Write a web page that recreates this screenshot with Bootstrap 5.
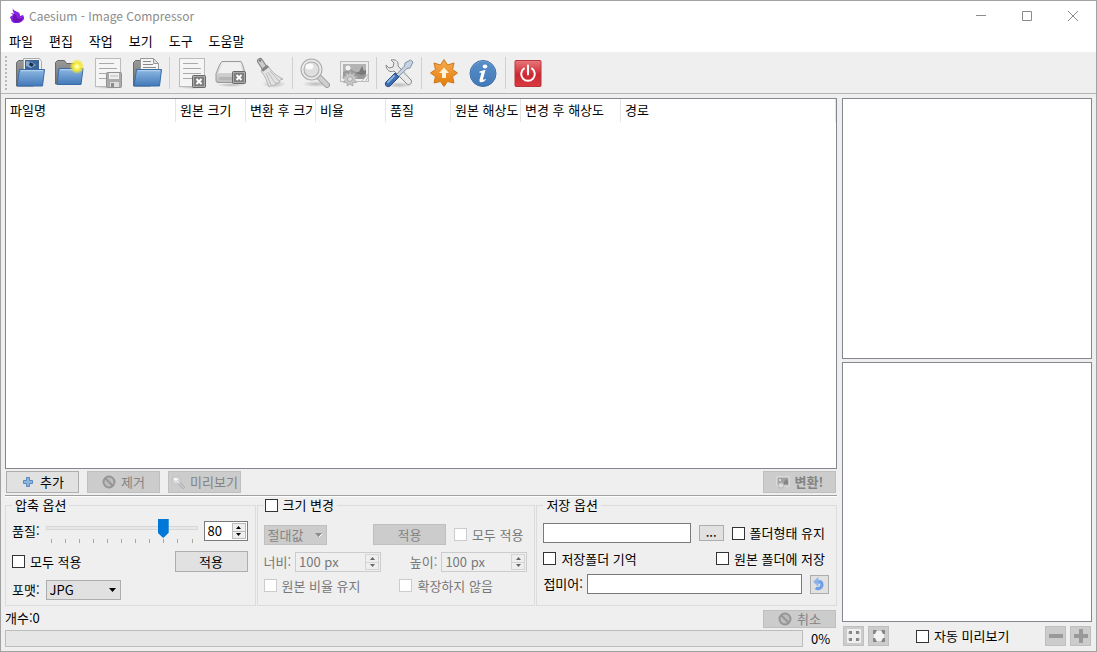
<!DOCTYPE html>
<html lang="ko">
<head>
<meta charset="utf-8">
<meta name="viewport" content="width=device-width, initial-scale=1">
<title>Caesium - Image Compressor</title>
<link href="https://cdn.jsdelivr.net/npm/bootstrap@5.3.0/dist/css/bootstrap.min.css" rel="stylesheet">
<style>
  body { font: 13px/16px "Noto Sans CJK KR", sans-serif; color: #000; background: #efefef; }
  .app-window { min-height: 100vh; border: 1px solid #a2a2a2; }
  .title-bar { height: 30px; background: #fff; color: #8c8c8c; font-size: 12px; }
  .title-bar svg { width: 16px; height: 16px; }
  .title-bar .glyph { width: 10px; height: 10px; }
  .win-btn { width: 46px; height: 30px; border: 0; padding: 0; background: none; display: grid; place-items: center; }
  .menu-strip { height: 22px; background: #fff; border-bottom: 1px solid #f0f0f0; }
  .menu-strip a { color: #000; text-decoration: none; padding: 2px 8px 0; }
  .tool-strip { height: 41px; border-bottom: 1px solid #b4b4b4; padding-left: 4px; }
  .grip { width: 2px; height: 34px; margin-right: 3px; background: repeating-linear-gradient(#b8b8b8 0 2px, #efefef 2px 4px); }
  .tool-btn { width: 39px; height: 38px; border: 0; padding: 0; background: none; display: grid; place-items: center; }
  .tool-btn svg { width: 32px; height: 32px; }
  .tool-sep { width: 6px; height: 32px; background: linear-gradient(#d0d0d0, #d0d0d0) 3px 0 / 1px 100% no-repeat; }
  .work-area { padding: 4px; gap: 5px; }
  .side { width: 250px; gap: 3px; }
  .pane { border: 1px solid #828790; background: #fff; }
  .file-table { table-layout: fixed; width: 100%; border-collapse: separate; border-spacing: 0; }
  .file-table th { font-weight: 400; height: 23px; padding: 0 2px 0 4px; border-right: 1px solid #e5e5e5; }
  .file-table th span { display: block; overflow: hidden; white-space: nowrap; line-height: 22px; height: 23px; }
  .w-name { width: 170px; } .w-size { width: 70px; } .w-quality { width: 65px; } .w-newres { width: 100px; }
  .push { height: 22px; width: 73px; padding: 0; border: 1px solid #adadad; background: #e1e1e1; color: #000; display: flex; align-items: center; justify-content: center; gap: 5px; white-space: nowrap; flex: none; line-height: 16px; }
  .push svg { width: 14px; height: 14px; flex: none; }
  .push:disabled { background: #ccc; border-color: #bfbfbf; color: #838383; }
  .push-low { height: 18px; }
  .push-apply { height: 21px; }
  .push-dots { width: 25px; height: 16px; align-items: end; }
  .push-reset { width: 19px; height: 19px; }
  .push-reset svg { width: 15px; height: 15px; }
  .push-sq { width: 21px; height: 20px; }
  .push-sq svg { width: 16px; height: 16px; }
  .action-row { padding: 2px 1px; border-bottom: 1px solid #a0a0a0; box-shadow: 0 1px #fff; gap: 8px; }
  .groups { gap: 1px; margin-top: 1px; }
  .opt-group { border: 1px solid #dcdcdc; padding: 0 7px 5px 6px; min-width: 0; }
  .opt-group legend { float: none; width: auto; font-size: 13px; line-height: 16px; margin: 0; padding: 0 3px; height: 16px; display: flex; align-items: center; gap: 5px; }
  .g-quality { flex: 249 1 0; } .g-size { flex: 279 1 0; } .g-save { flex: 302 1 0; }
  .g-size legend { padding-left: 1px; margin-left: 0; }
  .g-quality .rows { padding-top: 6px; gap: 8px; }
  .g-size .rows { padding-top: 11px; gap: 7px; }
  .g-save .rows { padding-top: 10px; gap: 9px; }
  .tick { appearance: none; width: 13px; height: 13px; margin: 0; border: 1px solid #333; background: #fff; border-radius: 0; flex: none; }
  .tick:checked { background: #0078d7; }
  .tick:disabled { border-color: #ccc; }
  .tick-label { display: flex; align-items: center; gap: 5px; white-space: nowrap; height: 13px; }
  .off { color: #787878; }
  .field { border: 1px solid #7a7a7a; background: #fff; height: 20px; padding: 0 4px; min-width: 0; border-radius: 0; }
  .spin { border: 1px solid #7a7a7a; background: #fff; height: 20px; display: flex; padding: 1px; }
  .spin input { border: 0; padding: 0 2px; min-width: 0; width: 100%; background: none; color: inherit; line-height: 16px; outline: 0; }
  .spin .arrows { width: 14px; flex: none; display: flex; flex-direction: column; }
  .spin button { flex: 1; padding: 0; border: 1px solid #bbb; background: #eee; display: grid; place-items: center; min-height: 0; }
  .spin button + button { border-top: 0; }
  .spin svg { width: 5px; height: 3px; display: block; }
  .spin.off { border-color: #ccc; background: #efefef; }
  .spin.off button { border-color: #d4d4d4; }
  .spin-q { width: 44px; } .spin-px { width: 86px; }
  .drop { position: relative; height: 20px; }
  .drop select { appearance: none; width: 100%; height: 20px; border: 1px solid #adadad; background: #e1e1e1; border-radius: 0; padding: 0 3px; line-height: 16px; color: #000; opacity: 1; }
  .drop select:disabled { background: #ccc; border-color: #bfbfbf; color: #838383; }
  .drop svg { position: absolute; right: 5px; top: 8px; width: 7px; height: 4px; pointer-events: none; }
  .drop-format { width: 75px; margin-left: 6px; } .drop-mode { width: 63px; }
  .slider { display: flex; flex-direction: column; min-width: 0; margin: 0 6px; }
  .slider input { appearance: none; width: 100%; height: 18px; margin: 0; background: none; display: block; }
  .slider input::-webkit-slider-runnable-track { height: 4px; border: 1px solid #d6d6d6; background: #e7eaea; }
  .slider input::-webkit-slider-thumb { appearance: none; width: 11px; height: 19px; margin-top: -8px; background: #0078d7; clip-path: polygon(0 0, 100% 0, 100% 72%, 50% 100%, 0 72%); }
  .scale-marks { display: flex; justify-content: space-between; padding: 2px 5px 0; }
  .scale-marks i { width: 1px; height: 4px; background: #aaa99c; }
  .status-row { height: 18px; margin-top: 4px; padding-right: 1px; }
  .bar-row { margin-top: 2px; gap: 8px; height: 17px; }
  .bar-track { height: 17px; border: 1px solid #bcbcbc; background: #e6e6e6; }
  .bar-row output { width: 26px; flex: none; line-height: 16px; }
  .zoom-row { height: 22px; padding: 0 1px; }
  .zoom-row .tick-label { margin: 0 auto 0 27px; }
</style>
</head>
<body>
<svg width="0" height="0" class="position-absolute" aria-hidden="true">
  <defs>
    <linearGradient id="blue" x2="0" y2="1"><stop stop-color="#8db8e2"/><stop offset="1" stop-color="#4379b9"/></linearGradient>
    <linearGradient id="grey" x2="0" y2="1"><stop stop-color="#ededed"/><stop offset="1" stop-color="#bdbdbd"/></linearGradient>
    <linearGradient id="dark" x2="0" y2="1"><stop stop-color="#999"/><stop offset="1" stop-color="#707070"/></linearGradient>
    <linearGradient id="orange" x2="0" y2="1"><stop stop-color="#f5ad55"/><stop offset=".5" stop-color="#ee922b"/><stop offset="1" stop-color="#e07d08"/></linearGradient>
    <linearGradient id="red" x2="0" y2="1"><stop stop-color="#e8797c"/><stop offset=".55" stop-color="#cc2731"/><stop offset="1" stop-color="#d83b43"/></linearGradient>
    <radialGradient id="sun"><stop stop-color="#fff"/><stop offset=".25" stop-color="#fffa70"/><stop offset=".6" stop-color="#f4e52c" stop-opacity=".9"/><stop offset="1" stop-color="#f4e52c" stop-opacity="0"/></radialGradient>
    <radialGradient id="shade"><stop stop-color="#777" stop-opacity=".45"/><stop offset="1" stop-color="#777" stop-opacity="0"/></radialGradient>
    <g id="folder-front"><path d="M5.500 12.500h25L28.500 29H3z" fill="url(#blue)" stroke="#386ba8"/><path d="M7 13.700h22" stroke="#b9d5f0"/></g>
    <g id="sheet"><ellipse cx="16" cy="30" rx="15" ry="2" fill="url(#shade)"/><rect x="3.500" y="1.500" width="25" height="28" fill="#f5f5f5" stroke="#bcbcbc"/><path d="M7 6.500h15M7 11.500h18M7 16.500h18M7 21.500h10" stroke="#a9a9a9"/></g>
    <g id="cross"><rect x=".5" y=".5" width="13" height="12" rx="1" fill="#7e7e7e" stroke="#696969"/><rect x="1.500" y="1.500" width="11" height="10" fill="none" stroke="#aaa"/><path d="M4.500 4l5 5m0-5l-5 5" stroke="#fff" stroke-width="2"/></g>
    <g id="photo"><rect x="2.500" y="4.500" width="28" height="20" fill="#eee" stroke="#bbb"/><path d="M5 7h23v15H5z" fill="#b4b4b4"/><path d="M5 15l7-3 6 3 10-1v8H5z" fill="#999"/><path d="M17 16l4-1 3-6 2 5 2-1v4l-5 1z" fill="#7a7a7a"/><circle cx="10" cy="11" r="2.500" fill="#f4f4f4"/><path d="M24 24l6-7v3l-3 5z" fill="#f5f5f5" stroke="#bbb"/><path d="M12 14l1.500 3.500 3-1.500-.5 3.500 3.500.5-3 2.500 2 3-3.500-.2-.2 3.700-2.800-2-2.800 2-.2-3.700-3.500.2 2-3-3-2.500 3.500-.5L8 16l3 1.500z" fill="#c8c8c8" stroke="#adadad"/><circle cx="12" cy="22" r="2.500" fill="#ddd" stroke="#aaa"/></g>
    <g id="photo-small"><path d="M1 2h12v9H1z" fill="#a2a2a2" stroke="#e6e6e6"/><circle cx="4" cy="5" r="1" fill="#eee"/><path d="M8 7l2-3 2 2v3H8z" fill="#858585"/><circle cx="5" cy="10.500" r="2.700" fill="#ddd" stroke="#b5b5b5"/></g>
    <g id="banned"><circle cx="7" cy="7" r="5.500" fill="#bcbcbc" stroke="#969696" stroke-width="2"/><path d="M3 3l8 8" stroke="#969696" stroke-width="2"/></g>
    <g id="lens"><path d="M20 20l8 8" stroke="#999" stroke-width="6" stroke-linecap="round"/><path d="M20 20l8 8" stroke="#cfcfcf" stroke-width="4" stroke-linecap="round"/><circle cx="12.500" cy="12.500" r="9" fill="#dedede" stroke="#aaa" stroke-width="4"/><circle cx="12.500" cy="12.500" r="9" fill="none" stroke="#e9e9e9" stroke-width="2"/><ellipse cx="10.500" cy="9.500" rx="4" ry="3" fill="#fafafa"/></g>
    <path id="up" d="M0 3L2.500 0 5 3z"/>
    <path id="down" d="M0 0h5L2.500 3z"/>
  </defs>
</svg>

<div class="app-window d-flex flex-column">
  <header class="title-bar d-flex align-items-center">
    <svg class="ms-2 me-1" viewBox="0 0 16 16" aria-hidden="true"><path d="M4 0c0 3 3 3 5 4 2 1 2 3 2 4l3-1c1 1 1 3 1 4-1 2-3 3-5 4H5c-2-1-3-2-3-4L1 10c0-2 2-2 3-3L2 5c1 0 2 0 3 1C5 4 3 3 4 0z" fill="#8a20e0"/><path d="M5 6c2 1 3 2 3 4 2 1 4 1 6 0-1 3-5 5-8 4-2-1-3-3-2-5z" fill="#6a12b8"/></svg>
    <span>Caesium - Image Compressor</span>
    <div class="d-flex ms-auto">
      <button class="win-btn" aria-label="최소화"><svg class="glyph" viewBox="0 0 10 10"><path d="M0 4.500h10" stroke="#8c8c8c"/></svg></button>
      <button class="win-btn" aria-label="최대화"><svg class="glyph" viewBox="0 0 10 10"><path d="M.5.5h9v9h-9z" fill="none" stroke="#8c8c8c"/></svg></button>
      <button class="win-btn" aria-label="닫기"><svg class="glyph" viewBox="0 0 10 10"><path d="M0 0l10 10M10 0L0 10" stroke="#8c8c8c"/></svg></button>
    </div>
  </header>
  <nav class="menu-strip d-flex">
    <a href="#">파일</a><a href="#">편집</a><a href="#">작업</a><a href="#">보기</a><a href="#">도구</a><a href="#">도움말</a>
  </nav>
  <div class="tool-strip d-flex align-items-center" role="toolbar">
    <span class="grip"></span>
    <button class="tool-btn" aria-label="사진 추가"><svg viewBox="0 0 32 32"><path d="M2.500 29V5.500l2-2h7l2 2h6V29z" fill="url(#dark)" stroke="#6b6b6b"/><path d="M9.500 1.500h16l2 3V16h-18z" fill="#f1f1f1" stroke="#aaa"/><path d="M11 3h14v10H11z" fill="#3c6595"/><path d="M12 4l6 1 4 3-5 3-5-2z" fill="#86a9d0"/><path d="M16 5l4 2-2 3-3-2z" fill="#18304f"/><use href="#folder-front"/></svg></button>
    <button class="tool-btn" aria-label="폴더 추가"><svg viewBox="0 0 32 32"><path d="M2.500 27V5.500l2-2h7l2 3h13V27z" fill="url(#dark)" stroke="#686868"/><path d="M6 11.500h24L28 27.500H4z" fill="url(#blue)" stroke="#386ba8"/><path d="M7 12.700h21" stroke="#b9d5f0"/><circle cx="24" cy="9.500" r="7.500" fill="url(#sun)"/></svg></button>
    <button class="tool-btn" aria-label="목록 저장"><svg viewBox="0 0 32 32"><use href="#sheet"/><rect x="14.500" y="15.500" width="15" height="15" rx="1" fill="#aaa" stroke="#929292"/><path d="M17 16h10v6H17z" fill="#eee"/><path d="M18 25h9v5h-9z" fill="#ddd"/><path d="M19 26h3v4h-3z" fill="#8a8a8a"/><path d="M18 19h8" stroke="#bbb"/></svg></button>
    <button class="tool-btn" aria-label="목록 열기"><svg viewBox="0 0 32 32"><path d="M2.500 29V5.500l2-2h7l2 2h6V29z" fill="url(#dark)" stroke="#6b6b6b"/><path d="M9.500 1.500h13l5 5V16h-18z" fill="#f5f5f5" stroke="#999"/><path d="M12 4.500h8M12 7.500h10M12 10.500h13" stroke="#888"/><path d="M22.500 1.500v5h5z" fill="#ddd" stroke="#999"/><use href="#folder-front"/></svg></button>
    <span class="tool-sep"></span>
    <button class="tool-btn" aria-label="목록에서 제거"><svg viewBox="0 0 32 32"><use href="#sheet"/><use href="#cross" x="16" y="18"/></svg></button>
    <button class="tool-btn" aria-label="디스크에서 삭제"><svg viewBox="0 0 32 32"><ellipse cx="16" cy="28" rx="15" ry="2" fill="url(#shade)"/><path d="M7 4.500h19c2 3 3 8 4 12v7q0 2-2 2H3q-2 0-2-2v-7c2-4 3-9 6-12z" fill="url(#grey)" stroke="#999"/><path d="M8 6h17l3 10H3z" fill="#f0f0f0"/><path d="M3 17.500h26" stroke="#ccc"/><path d="M4 20h13v3H4z" fill="#b5b5b5"/><use href="#cross" x="17" y="14"/></svg></button>
    <button class="tool-btn" aria-label="목록 비우기"><svg viewBox="0 0 32 32"><ellipse cx="20" cy="27" rx="12" ry="4" fill="url(#shade)"/><path d="M6 4l6 9" stroke="#888" stroke-width="6" stroke-linecap="round"/><path d="M6 4l6 9" stroke="#ccc" stroke-width="4" stroke-linecap="round"/><circle cx="6" cy="3.500" r="1.300" fill="#777"/><path d="M7 14l7-5 3 4c3 4 8 7 12 9l-3 1-1 3h-3l-2 3-2-1-3 2C13 24 11 19 7 14z" fill="#e2e2e2" stroke="#b3b3b3"/><path d="M12 16l5 12M14 15l7 11M16 14l9 10" stroke="#bcbcbc"/><path d="M8 13.500l6-4.500" stroke="#858585" stroke-width="3"/></svg></button>
    <span class="tool-sep"></span>
    <button class="tool-btn" aria-label="미리보기"><svg viewBox="0 0 32 32"><ellipse cx="17" cy="27" rx="14" ry="3" fill="url(#shade)"/><use href="#lens"/></svg></button>
    <button class="tool-btn" aria-label="변환"><svg viewBox="0 0 32 32"><use href="#photo"/></svg></button>
    <span class="tool-sep"></span>
    <button class="tool-btn" aria-label="설정"><svg viewBox="0 0 32 32"><ellipse cx="16" cy="28" rx="14" ry="3" fill="url(#shade)"/><path d="M3 8l3 3 4-1 1-4-3-3c4-1 8 1 7 6l13 14c2 3-2 6-4 4L11 14C7 16 3 13 3 8z" fill="#e9e9e9" stroke="#888"/><path d="M27.500 3l2.500 2-3 6-3 .5L15 20l-2-2 8.500-9 .5-3z" fill="#c7d2e2" stroke="#8391a5"/><path d="M12 16l4 4-9 9c-3 2-6-1-4-4z" fill="#3d70b3" stroke="#234a82"/><path d="M11 19l-6 6" stroke="#8db2dd" stroke-width="2" stroke-linecap="round"/></svg></button>
    <span class="tool-sep"></span>
    <button class="tool-btn" aria-label="업데이트 확인"><svg viewBox="0 0 32 32"><path d="M16 2.500l3.500 5.500 6.500-2-1.500 6.500 5 3.500-5 3.500 1.500 6.500-6.500-1.500L16 29.500l-3.500-5L6 26l1.500-6.500-5-3.500 5-3.500L6 6l6.500 2z" fill="url(#orange)" stroke="#ce7820"/><path d="M16 10.500l5 5.500h-3v5h-4v-5h-3z" fill="#fff2d6"/></svg></button>
    <button class="tool-btn" aria-label="정보"><svg viewBox="0 0 32 32"><circle cx="16" cy="16.500" r="13" fill="url(#blue)" stroke="#3e6ca5"/><circle cx="16" cy="16.500" r="12" fill="#3f7ab8" opacity=".65"/><ellipse cx="18" cy="9.500" rx="2.300" ry="2" fill="#fff"/><path d="M12.500 14.500l5-1.500h1L16 22q0 1.500 2.500 0l.5.8q-3 3-5.500 2.500-1.500-.5-1-2.500l2-7h-2z" fill="#fff"/></svg></button>
    <span class="tool-sep"></span>
    <button class="tool-btn" aria-label="종료"><svg viewBox="0 0 32 32"><rect x="3" y="3.500" width="26" height="26" rx="1" fill="url(#red)" stroke="#b8343b"/><path d="M12 11.500a6.800 6.800 0 1 0 8 0M16 8.500v9" fill="none" stroke="#fff" stroke-width="2" stroke-linecap="round"/></svg></button>
  </div>

  <div class="work-area d-flex flex-grow-1">
    <main class="d-flex flex-column flex-grow-1">
      <div class="pane flex-grow-1">
        <table class="file-table">
          <colgroup><col class="w-name"><col class="w-size"><col class="w-size"><col class="w-size"><col class="w-quality"><col class="w-size"><col class="w-newres"><col></colgroup>
          <thead><tr><th><span>파일명</span></th><th><span>원본 크기</span></th><th><span>변환 후 크기</span></th><th><span>비율</span></th><th><span>품질</span></th><th><span>원본 해상도</span></th><th><span>변경 후 해상도</span></th><th><span>경로</span></th></tr></thead>
        </table>
      </div>
      <div class="action-row d-flex">
        <button class="push"><svg viewBox="0 0 14 14"><path d="M5.500 2.500h3v3h3v3h-3v3h-3v-3h-3v-3h3z" fill="#8fb4de" stroke="#5787bf"/></svg>추가</button>
        <button class="push" disabled><svg viewBox="0 0 14 14"><use href="#banned"/></svg>제거</button>
        <button class="push" disabled><svg viewBox="0 0 32 32"><use href="#lens"/></svg>미리보기</button>
        <button class="push fw-bold ms-auto" disabled><svg viewBox="0 0 14 14"><use href="#photo-small"/></svg>변환!</button>
      </div>
      <div class="groups d-flex">
        <fieldset class="opt-group g-quality">
          <legend>압축 옵션</legend>
          <div class="rows d-flex flex-column">
            <div class="d-flex align-items-center">
              <label for="quality">품질:</label>
              <div class="slider flex-grow-1">
                <input type="range" id="quality" min="0" max="100" value="80">
                <div class="scale-marks"><i></i><i></i><i></i><i></i><i></i><i></i><i></i><i></i><i></i><i></i><i></i></div>
              </div>
              <div class="spin spin-q"><input type="text" value="80" aria-label="품질 값"><span class="arrows"><button aria-label="올림"><svg><use href="#up"/></svg></button><button aria-label="내림"><svg><use href="#down"/></svg></button></span></div>
            </div>
            <div class="d-flex align-items-center justify-content-between">
              <label class="tick-label"><input type="checkbox" class="tick">모두 적용</label>
              <button class="push push-apply">적용</button>
            </div>
            <div class="d-flex align-items-center">
              <label for="format">포맷:</label>
              <div class="drop drop-format"><select id="format"><option>JPG</option></select><svg viewBox="0 0 7 4"><path d="M0 0h7L3.500 4z"/></svg></div>
            </div>
          </div>
        </fieldset>
        <fieldset class="opt-group g-size">
          <legend><input type="checkbox" class="tick" id="resize"><label for="resize">크기 변경</label></legend>
          <div class="rows d-flex flex-column off">
            <div class="d-flex align-items-center pe-1">
              <div class="drop drop-mode"><select disabled aria-label="크기 방식"><option>절대값</option></select><svg viewBox="0 0 7 4"><path d="M0 0h7L3.500 4z" fill="#8d8d8d"/><path d="M4 4l3-3" stroke="#fff"/></svg></div>
              <button class="push push-apply ms-auto" disabled>적용</button>
              <label class="tick-label ms-2"><input type="checkbox" class="tick" disabled>모두 적용</label>
            </div>
            <div class="d-flex align-items-center">
              <label for="pxw" class="me-1">너비:</label>
              <div class="spin spin-px off"><input type="text" id="pxw" value="100 px" disabled><span class="arrows"><button disabled aria-label="올림"><svg fill="#666"><use href="#up"/></svg></button><button disabled aria-label="내림"><svg fill="#666"><use href="#down"/></svg></button></span></div>
              <label for="pxh" class="ms-auto me-1">높이:</label>
              <div class="spin spin-px off"><input type="text" id="pxh" value="100 px" disabled><span class="arrows"><button disabled aria-label="올림"><svg fill="#666"><use href="#up"/></svg></button><button disabled aria-label="내림"><svg fill="#666"><use href="#down"/></svg></button></span></div>
            </div>
            <div class="row g-0">
              <div class="col-6"><label class="tick-label"><input type="checkbox" class="tick" disabled>원본 비율 유지</label></div>
              <div class="col-6 ps-1"><label class="tick-label"><input type="checkbox" class="tick" disabled>확장하지 않음</label></div>
            </div>
          </div>
        </fieldset>
        <fieldset class="opt-group g-save">
          <legend>저장 옵션</legend>
          <div class="rows d-flex flex-column">
            <div class="d-flex align-items-center pe-1">
              <input type="text" class="field flex-grow-1" size="1" aria-label="저장 폴더">
              <button class="push push-dots mx-2" aria-label="폴더 선택">...</button>
              <label class="tick-label"><input type="checkbox" class="tick">폴더형태 유지</label>
            </div>
            <div class="d-flex justify-content-between pe-1">
              <label class="tick-label"><input type="checkbox" class="tick">저장폴더 기억</label>
              <label class="tick-label"><input type="checkbox" class="tick">원본 폴더에 저장</label>
            </div>
            <div class="d-flex align-items-center">
              <label for="suffix" class="me-1">접미어:</label>
              <input type="text" id="suffix" class="field flex-grow-1" size="1">
              <button class="push push-reset ms-2" aria-label="되돌리기"><svg viewBox="0 0 14 14"><path d="M4 4.500h4a3.500 3.500 0 1 1-4.500 5.500" fill="none" stroke="#6f9fe4" stroke-width="3"/><path d="M6 0v9L1 4.500z" fill="#8db3ec"/></svg></button>
            </div>
          </div>
        </fieldset>
      </div>
      <div class="status-row d-flex justify-content-between">
        <span>개수:0</span>
        <button class="push push-low" disabled><svg viewBox="0 0 14 14"><use href="#banned"/></svg>취소</button>
      </div>
      <div class="bar-row d-flex align-items-center">
        <div class="bar-track flex-grow-1" role="progressbar" aria-valuenow="0" aria-valuemin="0" aria-valuemax="100" aria-label="진행률"></div>
        <output>0%</output>
      </div>
    </main>
    <aside class="side d-flex flex-column flex-shrink-0">
      <div class="pane flex-fill"></div>
      <div class="pane flex-fill"></div>
      <div class="zoom-row d-flex align-items-center">
        <button class="push push-sq" disabled aria-label="창에 맞춤"><svg viewBox="0 0 16 16"><path d="M1 1h14v14H1z" fill="#eee"/><path d="M3 3h3v3H3zM10 3h3v3h-3zM3 10h3v3H3zM10 10h3v3h-3z" fill="#858585"/><path d="M2 5h2M12 5h2M2 11h2M12 11h2" stroke="#aaa"/></svg></button>
        <button class="push push-sq ms-1" disabled aria-label="원본 크기"><svg viewBox="0 0 16 16"><path d="M5 3h6l2 2v6l-2 2H5l-2-2V5z" fill="#f2f2f2"/><path d="M2 2h4L5 4 4 6H2zM14 2h-4l1 2 1 2h2zM2 14h4l-1-2-1-2H2zM14 14h-4l1-2 1-2h2z" fill="#858585"/></svg></button>
        <label class="tick-label"><input type="checkbox" class="tick">자동 미리보기</label>
        <button class="push push-sq" disabled aria-label="축소"><svg viewBox="0 0 16 16"><path d="M1 6h14v4H1z" fill="#999"/></svg></button>
        <button class="push push-sq ms-1" disabled aria-label="확대"><svg viewBox="0 0 16 16"><path d="M6 1h4v5h5v4h-5v5H6v-5H1V6h5z" fill="#999"/></svg></button>
      </div>
    </aside>
  </div>
</div>
<script src="https://cdn.jsdelivr.net/npm/bootstrap@5.3.0/dist/js/bootstrap.bundle.min.js"></script>
</body>
</html>
